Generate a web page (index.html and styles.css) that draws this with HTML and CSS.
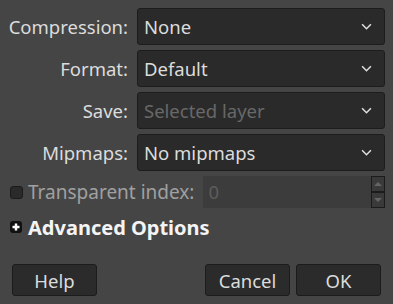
FILE: index.html
```html
<!DOCTYPE html>
<html lang="en">
<head>
    <meta charset="UTF-8">
    <meta name="viewport" content="width=device-width, initial-scale=1.0">
    <title>Export Options</title>
    <link rel="stylesheet" href="styles.css">
</head>
<body>
    <div class="dialog">
        <div class="form">
            <label class="label">Compression:</label>
            <div class="combo"><span>None</span><svg class="chevron" viewBox="0 0 10 6"><path d="M1 1 L5 5 L9 1" /></svg></div>

            <label class="label">Format:</label>
            <div class="combo"><span>Default</span><svg class="chevron" viewBox="0 0 10 6"><path d="M1 1 L5 5 L9 1" /></svg></div>

            <label class="label">Save:</label>
            <div class="combo disabled"><span>Selected layer</span><svg class="chevron" viewBox="0 0 10 6"><path d="M1 1 L5 5 L9 1" /></svg></div>

            <label class="label">Mipmaps:</label>
            <div class="combo"><span>No mipmaps</span><svg class="chevron" viewBox="0 0 10 6"><path d="M1 1 L5 5 L9 1" /></svg></div>
        </div>

        <div class="index-row">
            <span class="checkbox"></span>
            <span class="index-label">Transparent index:</span>
            <div class="spin">
                <div class="spin-field">0</div>
                <div class="spin-buttons">
                    <span class="spin-btn"><svg viewBox="0 0 8 4"><path d="M0 4 L4 0 L8 4 Z" /></svg></span>
                    <span class="spin-btn"><svg viewBox="0 0 8 4"><path d="M0 0 L4 4 L8 0 Z" /></svg></span>
                </div>
            </div>
        </div>

        <div class="advanced">
            <span class="expander"><svg viewBox="0 0 12 12"><path d="M6 2.5 V9.5 M2.5 6 H9.5" /></svg></span>
            <span class="advanced-label">Advanced Options</span>
        </div>

        <div class="buttons">
            <button class="btn">Help</button>
            <div class="right">
                <button class="btn">Cancel</button>
                <button class="btn">OK</button>
            </div>
        </div>
    </div>
</body>
</html>
```

FILE: styles.css
```css
body {
    margin: 0;
    background-color: #454545;
    font-family: "Noto Sans", "Open Sans", sans-serif;
    font-size: 18.5px;
    color: #dcdcdc;
}

.dialog {
    padding: 8px 8px 0 8px;
}

.form {
    display: grid;
    grid-template-columns: 120px 1fr;
    column-gap: 9px;
    row-gap: 5px;
}

.label {
    text-align: right;
    line-height: 37px;
    white-space: nowrap;
}

.combo {
    height: 37px;
    box-sizing: border-box;
    border: 1px solid #1d1d1d;
    border-radius: 3px;
    background-color: #2a2a2a;
    display: flex;
    align-items: center;
    justify-content: space-between;
    padding: 0 12px 0 6px;
}

.combo.disabled span {
    color: #686868;
}

.chevron {
    width: 11px;
    height: 7px;
    fill: none;
    stroke: #e0e0e0;
    stroke-width: 1.4;
}

.index-row {
    display: flex;
    align-items: center;
    margin-top: 5px;
    height: 32px;
}

.checkbox {
    width: 13px;
    height: 13px;
    box-sizing: border-box;
    margin-left: 2px;
    border: 1px solid #1b1b1b;
    border-radius: 3px;
    background-color: #2a2a2a;
}

.index-label {
    margin-left: 5px;
    font-size: 19px;
    color: #a0a0a0;
    white-space: nowrap;
}

.spin {
    flex: 1;
    display: flex;
    height: 32px;
    margin-left: 9px;
}

.spin-field {
    flex: 1;
    background-color: #3c3c3c;
    color: #5c5c5c;
    line-height: 32px;
    padding-left: 5px;
}

.spin-buttons {
    width: 14px;
    display: flex;
    flex-direction: column;
}

.spin-btn {
    flex: 1;
    box-sizing: border-box;
    border: 1px solid #1b1b1b;
    background-color: #3a3a3a;
    display: flex;
    align-items: center;
    justify-content: center;
}

.spin-btn svg {
    width: 8px;
    height: 4px;
    fill: #646464;
}

.advanced {
    display: flex;
    align-items: center;
    height: 30px;
    margin-top: 4px;
}

.expander {
    width: 12px;
    height: 12px;
    margin-left: 2px;
    border-radius: 3px;
    background-color: #111;
    display: flex;
}

.expander svg {
    width: 12px;
    height: 12px;
    fill: none;
    stroke: #fff;
    stroke-width: 2.4;
}

.advanced-label {
    margin-left: 6px;
    font-weight: bold;
    font-size: 20px;
    color: #f4f4f4;
}

.buttons {
    display: flex;
    justify-content: space-between;
    margin-top: 22px;
    padding: 0 4px;
}

.right {
    display: flex;
    gap: 6px;
}

.btn {
    width: 85px;
    height: 32px;
    border: 1px solid #1c1c1c;
    border-radius: 3px;
    background-color: #2b2b2b;
    color: #dcdcdc;
    font-family: inherit;
    font-size: 18.5px;
    padding: 0;
}
```
